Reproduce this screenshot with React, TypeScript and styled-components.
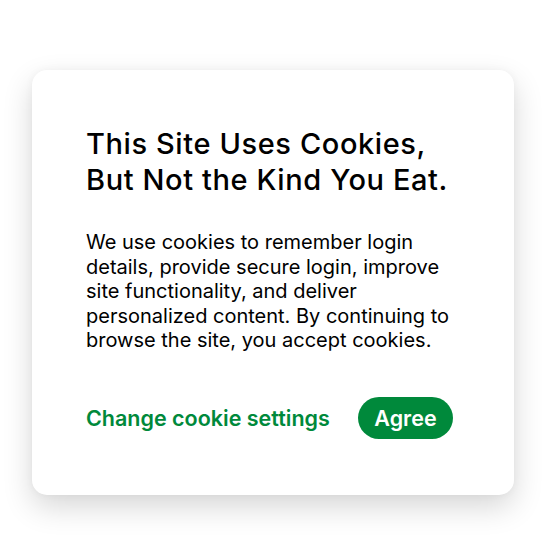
import styled, { createGlobalStyle } from 'styled-components'

const Global = createGlobalStyle`
  html, body {
    margin: 0;
    padding: 0;
    background: #ffffff;
  }
  body {
    font-family: Inter, 'Noto Sans', 'Liberation Sans', sans-serif;
    -webkit-font-smoothing: antialiased;
  }
`

const Page = styled.div`
  width: 544px;
  height: 544px;
  padding: 70px 30px 0 32px;
  box-sizing: border-box;
`

const Card = styled.section`
  width: 482px;
  height: 425px;
  box-sizing: border-box;
  padding: 56px 54px 56px;
  background: #ffffff;
  border-radius: 15px;
  box-shadow:
    0 12px 30px rgba(0, 0, 0, 0.16),
    0 0 8px rgba(0, 0, 0, 0.04);
  display: flex;
  flex-direction: column;
`

const Title = styled.h1`
  margin: 0;
  font-size: 29px;
  line-height: 36px;
  font-weight: 500;
  letter-spacing: 0.6px;
  color: #000000;
`

const Body = styled.p`
  margin: 32px 0 0;
  font-size: 20px;
  line-height: 24.5px;
  font-weight: 400;
  color: #000000;
`

const Actions = styled.div`
  margin-top: auto;
  display: flex;
  align-items: center;
  gap: 28px;
`

const LinkBtn = styled.button`
  background: none;
  border: none;
  padding: 0;
  font-family: inherit;
  font-size: 21.5px;
  font-weight: 600;
  color: #00893b;
  cursor: pointer;
`

const AgreeBtn = styled.button`
  height: 42px;
  padding: 0 16.5px;
  border: none;
  border-radius: 21px;
  background: #00893b;
  color: #ffffff;
  font-family: inherit;
  font-size: 21.5px;
  font-weight: 600;
  cursor: pointer;
`

export default function App() {
  return (
    <Page>
      <Global />
      <Card>
        <Title>
          This Site Uses Cookies,
          <br />
          But Not the Kind You Eat.
        </Title>
        <Body>
          We use cookies to remember login details, provide secure login, improve site
          functionality, and deliver personalized content. By continuing to browse the site,
          you accept cookies.
        </Body>
        <Actions>
          <LinkBtn>Change cookie settings</LinkBtn>
          <AgreeBtn>Agree</AgreeBtn>
        </Actions>
      </Card>
    </Page>
  )
}
